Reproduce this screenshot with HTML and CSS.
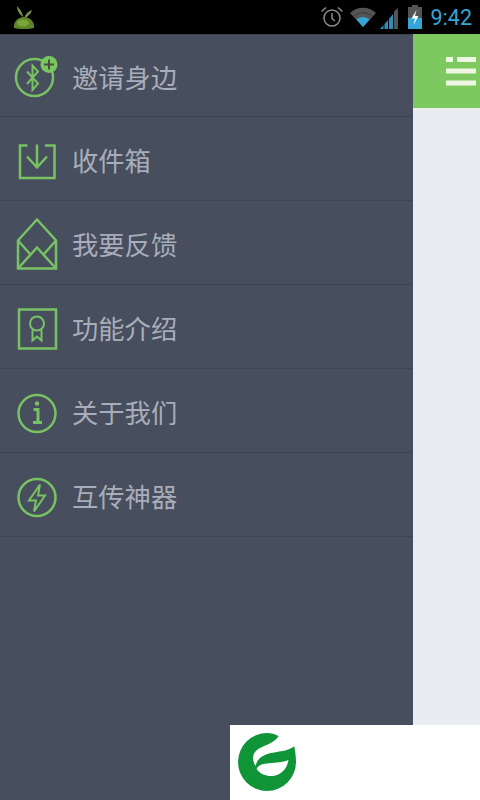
FILE: index.html
```html
<!DOCTYPE html>
<html lang="zh">
<head>
<meta charset="utf-8">
<title>菜单</title>
<link rel="stylesheet" href="styles.css">
</head>
<body>
<div class="status">
  <svg class="sprout" width="26" height="26" viewBox="0 0 26 26">
    <path d="M12.500 15C12 11 10 7 6 3C6 7 8 11 11 13ZM13.500 15C14 12 16 9 21 7C20 11 17 13 14.500 15Z" fill="#7d8f4c"/>
    <path d="M3 25C2 19 7 14 13 14C19 14 24 19 23 25C18 26.500 8 26.500 3 25Z" fill="#5c8428"/>
    <ellipse cx="12" cy="20" rx="6" ry="3.500" fill="#7ba53a"/>
  </svg>
  <div class="status-right">
    <svg width="24" height="24" viewBox="0 0 24 24" fill="none" stroke="#8c8c8c" stroke-width="1.500">
      <circle cx="12" cy="13" r="8"/>
      <path d="M12 8V13.500L15 16M1.500 6.500L6 2.500M22.500 6.500L18 2.500"/>
    </svg>
    <svg class="wifi" width="28" height="24" viewBox="0 0 28 24">
      <path d="M1 8C8 1 20 1 27 8L14 22Z" fill="#555"/>
      <path d="M7.500 14.500C11 11 17 11 20.500 14.500L14 22Z" fill="#33a5d6"/>
      <path d="M4.500 11.500C10 6.500 18 6.500 23.500 11.500" fill="none" stroke="#333" stroke-width="0.800"/>
    </svg>
    <svg class="signal" width="20" height="24" viewBox="0 0 20 24">
      <path d="M15 6.500L19 3V24H15Z" fill="#555"/>
      <path d="M1 24L4.500 20V24ZM5.500 19L9 15V24H5.500ZM10 14L14 9V24H10Z" fill="#2f8fb8"/>
    </svg>
    <svg class="battery" width="16" height="26" viewBox="0 0 16 26">
      <path d="M5 1H11V3H15V25H1V3H5Z" fill="#555"/>
      <path d="M1 14H15V25H1Z" fill="#33a5d6"/>
      <path d="M9.500 6L4.500 14.500H8L6.500 21L11.500 12H8Z" fill="#fff"/>
    </svg>
    <span class="clock">9:42</span>
  </div>
</div>
<div class="main">
  <nav class="drawer">
    <a class="row">
      <svg class="icon" width="56" height="48" viewBox="0 0 56 48" fill="none">
        <circle cx="19.500" cy="25.500" r="18.500"/>
        <path class="thin" d="M12 19.500L23 31.500L17.500 38V13.500L23 19.500L12 32"/>
        <circle class="badge" cx="34" cy="12.500" r="8.500"/>
        <path class="plus" d="M34 7.500V17.500M29 12.500H39"/>
      </svg>
      <span>邀请身边</span>
    </a>
    <a class="row">
      <svg class="icon" width="56" height="48" viewBox="0 0 56 48" fill="none">
        <path d="M30 10.500H39.500V43H5V10.500H12.500"/>
        <path d="M22 9.500V32M12 21.500L22 32.500L32 21.500"/>
      </svg>
      <span>收件箱</span>
    </a>
    <a class="row">
      <svg class="icon" width="56" height="48" viewBox="0 0 56 48" fill="none">
        <path d="M3 21.500L22 0.500L41 21.500V49.500H3Z"/>
        <path d="M3 21.500L15 35M41 21.500L29 35M3 49.500L22 28.500L41 49.500"/>
      </svg>
      <span>我要反馈</span>
    </a>
    <a class="row">
      <svg class="icon" width="56" height="48" viewBox="0 0 56 48" fill="none">
        <rect x="4" y="6.500" width="37" height="39"/>
        <circle class="thin" cx="22" cy="20.500" r="7"/>
        <path class="thin" d="M17.500 27V37.500L22 33.500L26.500 37.500V27"/>
      </svg>
      <span>功能介绍</span>
    </a>
    <a class="row">
      <svg class="icon" width="56" height="48" viewBox="0 0 56 48" fill="none">
        <circle cx="22" cy="26.500" r="18.500"/>
        <path class="info" d="M18.500 22.500H23V35M18 35.500H27"/>
        <circle class="dot" cx="22" cy="16.500" r="2.200"/>
      </svg>
      <span>关于我们</span>
    </a>
    <a class="row">
      <svg class="icon" width="56" height="48" viewBox="0 0 56 48" fill="none">
        <circle cx="22" cy="26.500" r="18.500"/>
        <path class="thin" d="M25 13.500L14 29.500H21L19 40.500L30 24.500H23Z"/>
      </svg>
      <span>互传神器</span>
    </a>
  </nav>
  <div class="content">
    <header class="bar">
      <svg class="menu" width="30" height="29" viewBox="0 0 30 29">
        <path d="M0 0H7V5H0ZM11 0H30V5H11ZM0 11.500H30V16.500H0ZM0 23.500H30V28.500H0Z"/>
      </svg>
    </header>
  </div>
</div>
<div class="ad">
  <svg width="58" height="58" viewBox="0 0 58 58">
    <path d="M40.700 3.300C37 1 33 0 29 0A29 29 0 1 0 58 29C58 23 57 18 56.300 13.300C50 18 44 18 39 19C31 20 20 22 17.500 33C14 27 14 21 19 17C24 12.500 34 12 40.700 3.300Z" fill="#0f9438"/>
    <path d="M20 34C23 30 28 29 35 28.500C41 28 47 28 52 25.500C51 35 45 43 35 44.500C28 45 23 41 20 34Z" fill="#0f9438"/>
    <path d="M18.500 36C21 31 27 30.500 34 30C41 29.500 46 29 50.500 27C49 36 43 42 35 43C28 43.500 22 41 18.500 36Z" fill="#fff"/>
  </svg>
</div>
</body>
</html>
```

FILE: styles.css
```css
html, body {
  margin: 0;
  padding: 0;
}

body {
  width: 480px;
  height: 800px;
  overflow: hidden;
  position: relative;
  display: flex;
  flex-direction: column;
  background: #e9edf2;
  font-family: "Noto Sans CJK SC", "Noto Sans", sans-serif;
}

.status {
  height: 34px;
  flex: none;
  background: #000;
  display: flex;
  align-items: center;
  justify-content: space-between;
  padding: 0 8px 0 11px;
}

.sprout {
  margin-bottom: 2px;
}

.status-right {
  display: flex;
  align-items: center;
}

.wifi {
  margin-left: 5px;
}

.signal {
  margin-left: 2px;
}

.battery {
  margin-left: 8px;
}

.clock {
  margin-left: 8px;
  font-family: Roboto, sans-serif;
  font-size: 21.500px;
  color: #33a5d6;
}

.main {
  flex: 1;
  display: flex;
}

.drawer {
  width: 413px;
  flex: none;
  background: #474e5d;
  border-top: 1px solid #3d4350;
  box-sizing: border-box;
}

.row {
  height: 84px;
  box-sizing: border-box;
  border-bottom: 1px solid #3e4451;
  display: flex;
  align-items: center;
  padding-left: 15px;
  font-size: 26.300px;
  font-weight: 400;
  color: #a7adba;
}

.row:first-child {
  height: 82px;
}

.row span {
  padding-top: 2px;
}

.icon {
  flex: none;
  margin-right: 1px;
  overflow: visible;
  stroke: #78c263;
  stroke-width: 2.500;
}

.icon .thin {
  stroke-width: 2;
}

.icon .badge {
  fill: #78c85f;
  stroke: none;
}

.icon .plus {
  stroke: #475040;
  stroke-width: 2;
}

.icon .info {
  stroke-width: 3;
}

.icon .dot {
  fill: #78c263;
  stroke: none;
}

.content {
  flex: 1;
}

.bar {
  height: 74px;
  background: #7dc95f;
  box-sizing: border-box;
  padding: 23px 0 0 33px;
}

.menu {
  display: block;
  fill: #eef7e4;
}

.ad {
  position: absolute;
  left: 230px;
  top: 725px;
  width: 250px;
  height: 75px;
  background: #fff;
  padding: 8px 0 0 8px;
  box-sizing: border-box;
}
```
